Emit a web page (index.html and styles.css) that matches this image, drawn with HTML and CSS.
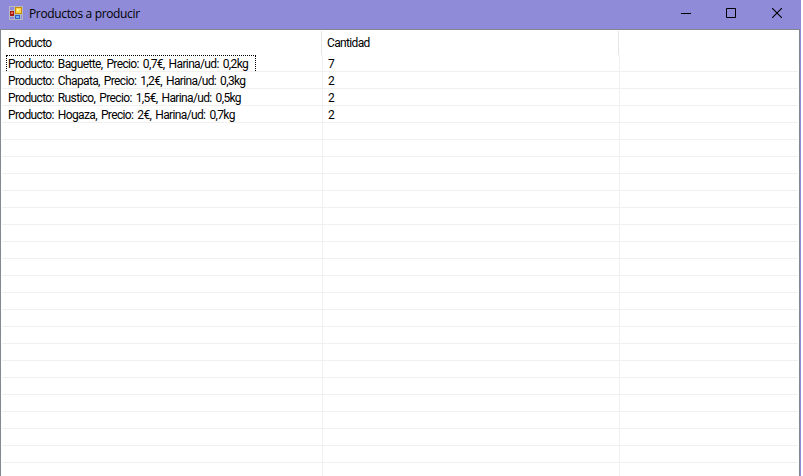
FILE: index.html
```
<!DOCTYPE html>
<html lang="es">
<head>
<meta charset="utf-8">
<title>Productos a producir</title>
<link rel="stylesheet" href="styles.css">
</head>
<body>
<div class="window">
  <header class="titlebar">
    <svg class="app-icon" width="14" height="14" viewBox="0 0 14 14" shape-rendering="crispEdges">
      <path fill="#b9b9c4" d="M0 0h14v14H0z"/>
      <path fill="#8f8bd8" d="M1 1h4v3H1zM1 11h4v2H1zM12 9h1v4h-1z"/>
      <path fill="#a51d12" d="M1 5h4v5H1z"/><path fill="#ee6a58" d="M2 6h2v2H2z"/>
      <path fill="#c98a08" d="M6 1h7v7H6z"/><path fill="#ffd84c" d="M7 2h5v5H7z"/><path fill="#fff0a0" d="M8 3h2v2H8z"/>
      <path fill="#2d62c4" d="M6 9h5v4H6z"/><path fill="#78b0f4" d="M7 10h3v2H7z"/>
    </svg>
    <h1 class="title">Productos a producir</h1>
    <div class="controls">
      <svg width="10" height="10" viewBox="0 0 10 10" shape-rendering="crispEdges"><path d="M0 5h10v1H0z"/></svg>
      <svg width="10" height="10" viewBox="0 0 10 10"><path fill="none" stroke="#000" d="M.5.5h9v9h-9z"/></svg>
      <svg width="10" height="10" viewBox="0 0 10 10"><path fill="none" stroke="#000" stroke-width="1.1" d="M0 0l10 10M10 0L0 10"/></svg>
    </div>
  </header>
  <main class="list">
    <div class="head"><div>Producto</div><div>Cantidad</div></div>
    <div class="rows">
      <div class="row"><div><span class="focused">Producto: Baguette, Precio: 0,7€, Harina/ud: 0,2kg</span></div><div>7</div><div></div></div>
      <div class="row"><div><span>Producto: Chapata, Precio: 1,2€, Harina/ud: 0,3kg</span></div><div>2</div><div></div></div>
      <div class="row"><div><span>Producto: Rustico, Precio: 1,5€, Harina/ud: 0,5kg</span></div><div>2</div><div></div></div>
      <div class="row"><div><span>Producto: Hogaza, Precio: 2€, Harina/ud: 0,7kg</span></div><div>2</div><div></div></div>
      <div class="empty"><div></div><div></div><div></div></div>
    </div>
  </main>
</div>
</body>
</html>
```
FILE: styles.css
```
* { box-sizing: border-box; }
body { margin: 0; background: #fff; overflow: hidden; color: #000; }
.window {
  width: 801px; height: 476px; padding-right: 1px;
  display: flex; flex-direction: column;
  background: #8f8bd8;
}
.titlebar { height: 29px; flex: none; display: flex; align-items: flex-start; padding: 6px 18px 0 9px; }
.title { margin: 0 0 0 6px; font: 12px/16px "Open Sans", sans-serif; letter-spacing: -0.35px; }
.controls { margin: 2px 0 0 auto; display: flex; gap: 35px; }
.controls svg { display: block; }
.controls svg:nth-child(-n+2) { margin: 0 1px 0 -1px; }
.list {
  flex: 1; min-height: 0; overflow: hidden;
  border: solid #828790; border-width: 1px 1px 0 1px;
  background: #fff; padding: 1px 1px 0 1px;
  font: 12px/16px Roboto, sans-serif; letter-spacing: -0.64px; word-spacing: 1.7px; white-space: nowrap;
}
.head { height: 24px; display: grid; grid-template-columns: 320px 297px; }
.head div { border-right: 1px solid #e5e5e5; padding: 4px 0 0 6px; }
.head div + div { padding-left: 5px; }
.rows { height: 421px; }
.row, .empty { display: grid; grid-template-columns: 321px 297px 1fr; }
.row { height: 17px; grid-template-rows: 17px; }
.row > div, .empty > div { border-right: 1px solid #f0f0f0; padding-left: 5px; }
.row > div:last-child, .empty > div:last-child { border-right: 0; }
.row > div { border-bottom: 1px solid #f0f0f0; line-height: 18px; }
.row > div:first-child { padding-left: 4px; }
.row span { display: block; width: 250px; height: 16px; padding-left: 2px; line-height: 18px; }
.row .focused { border: dotted #000; border-width: 1px 1px 0 1px; padding-left: 1px; line-height: 16px; }
.empty { height: 353px; }
.empty > div { background: repeating-linear-gradient(#fff 0 16px, #f0f0f0 16px 17px); }
```
